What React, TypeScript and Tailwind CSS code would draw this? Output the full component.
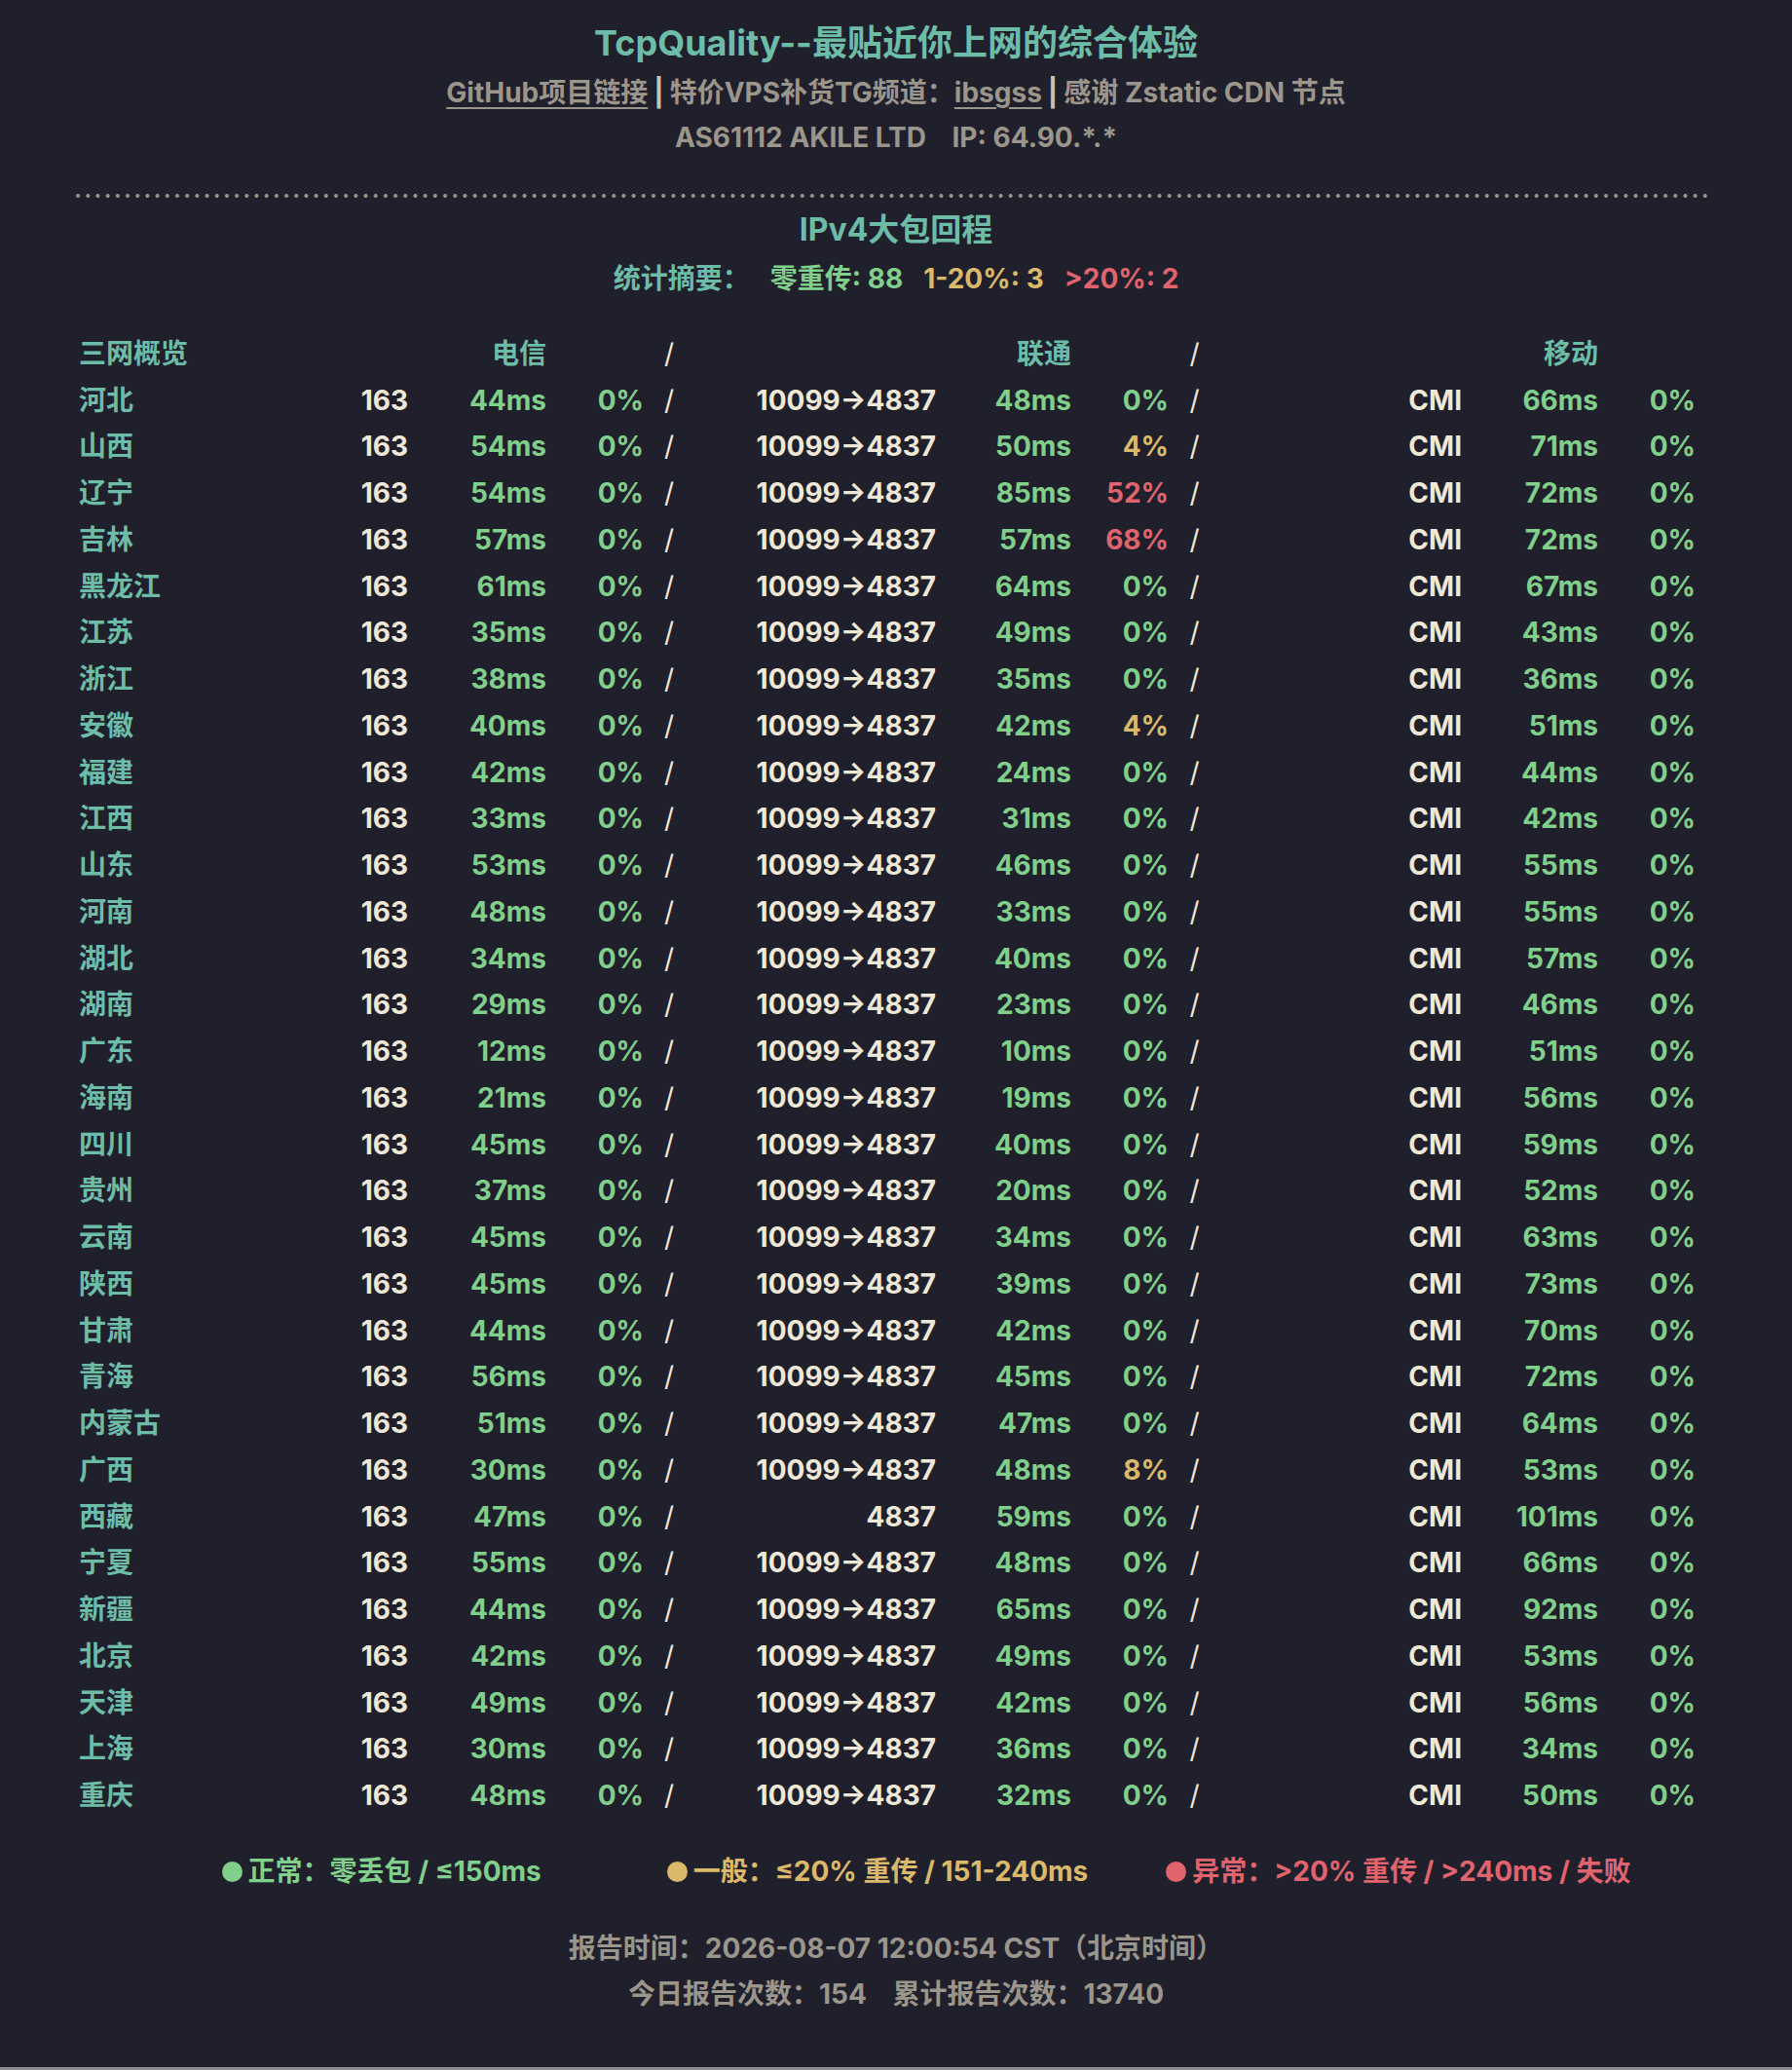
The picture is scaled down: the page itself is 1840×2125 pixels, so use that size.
import React from "react";

type Row = [string, string, string, string, string, string, string, string, string];
// name, isp1, ms1, loss1, isp2, ms2, loss2, ms3, loss3
const rows: Row[] = [
  ["河北", "163", "44ms", "0%", "10099→4837", "48ms", "0%", "66ms", "0%"],
  ["山西", "163", "54ms", "0%", "10099→4837", "50ms", "4%", "71ms", "0%"],
  ["辽宁", "163", "54ms", "0%", "10099→4837", "85ms", "52%", "72ms", "0%"],
  ["吉林", "163", "57ms", "0%", "10099→4837", "57ms", "68%", "72ms", "0%"],
  ["黑龙江", "163", "61ms", "0%", "10099→4837", "64ms", "0%", "67ms", "0%"],
  ["江苏", "163", "35ms", "0%", "10099→4837", "49ms", "0%", "43ms", "0%"],
  ["浙江", "163", "38ms", "0%", "10099→4837", "35ms", "0%", "36ms", "0%"],
  ["安徽", "163", "40ms", "0%", "10099→4837", "42ms", "4%", "51ms", "0%"],
  ["福建", "163", "42ms", "0%", "10099→4837", "24ms", "0%", "44ms", "0%"],
  ["江西", "163", "33ms", "0%", "10099→4837", "31ms", "0%", "42ms", "0%"],
  ["山东", "163", "53ms", "0%", "10099→4837", "46ms", "0%", "55ms", "0%"],
  ["河南", "163", "48ms", "0%", "10099→4837", "33ms", "0%", "55ms", "0%"],
  ["湖北", "163", "34ms", "0%", "10099→4837", "40ms", "0%", "57ms", "0%"],
  ["湖南", "163", "29ms", "0%", "10099→4837", "23ms", "0%", "46ms", "0%"],
  ["广东", "163", "12ms", "0%", "10099→4837", "10ms", "0%", "51ms", "0%"],
  ["海南", "163", "21ms", "0%", "10099→4837", "19ms", "0%", "56ms", "0%"],
  ["四川", "163", "45ms", "0%", "10099→4837", "40ms", "0%", "59ms", "0%"],
  ["贵州", "163", "37ms", "0%", "10099→4837", "20ms", "0%", "52ms", "0%"],
  ["云南", "163", "45ms", "0%", "10099→4837", "34ms", "0%", "63ms", "0%"],
  ["陕西", "163", "45ms", "0%", "10099→4837", "39ms", "0%", "73ms", "0%"],
  ["甘肃", "163", "44ms", "0%", "10099→4837", "42ms", "0%", "70ms", "0%"],
  ["青海", "163", "56ms", "0%", "10099→4837", "45ms", "0%", "72ms", "0%"],
  ["内蒙古", "163", "51ms", "0%", "10099→4837", "47ms", "0%", "64ms", "0%"],
  ["广西", "163", "30ms", "0%", "10099→4837", "48ms", "8%", "53ms", "0%"],
  ["西藏", "163", "47ms", "0%", "4837", "59ms", "0%", "101ms", "0%"],
  ["宁夏", "163", "55ms", "0%", "10099→4837", "48ms", "0%", "66ms", "0%"],
  ["新疆", "163", "44ms", "0%", "10099→4837", "65ms", "0%", "92ms", "0%"],
  ["北京", "163", "42ms", "0%", "10099→4837", "49ms", "0%", "53ms", "0%"],
  ["天津", "163", "49ms", "0%", "10099→4837", "42ms", "0%", "56ms", "0%"],
  ["上海", "163", "30ms", "0%", "10099→4837", "36ms", "0%", "34ms", "0%"],
  ["重庆", "163", "48ms", "0%", "10099→4837", "32ms", "0%", "50ms", "0%"],
];

function lossClass(v: string) {
  const n = parseInt(v, 10);
  if (n > 20) return "text-[#e0646e]";
  if (n > 0) return "text-[#dbb96b]";
  return "text-[#80cf8b]";
}

const gridCols =
  "grid grid-cols-[240px_98px_142px_100px_52px_248px_139px_100px_53px_248px_140px_100px] h-[47.75px] items-center leading-none";

export default function App() {
  return (
    <div
      className="w-[1840px] bg-[#201f2c] text-[#9b968b] font-bold"
      style={{ fontFamily: '"Inter", "Noto Sans CJK SC", sans-serif' }}
    >
      <div className="h-[2122px] pt-[20px] flex flex-col">
        <div className="text-center text-[36px] leading-[48px] text-[#6dbca7]">
          TcpQuality--最贴近你上网的综合体验
        </div>
        <div className="mt-[7px] text-center text-[28px] leading-[40px] text-[#9b968b]">
          <span className="underline underline-offset-[5px] decoration-[2px]">GitHub项目链接</span>
          <span className="mx-[6px] text-[#c9c3b5]">|</span>
          <span>特价VPS补货TG频道：</span>
          <span className="underline underline-offset-[5px] decoration-[2px]">ibsgss</span>
          <span className="mx-[6px] text-[#c9c3b5]">|</span>
          <span>感谢 Zstatic CDN 节点</span>
        </div>
        <div className="mt-[6px] text-center text-[28px] leading-[40px] text-[#9b968b] whitespace-pre">
          {"AS61112 AKILE LTD    IP: 64.90.*.*"}
        </div>
        <div className="mt-[38px] ml-[75px] w-[1683px] h-[4px] bg-[radial-gradient(circle,#9b968b_1.7px,transparent_2.2px)] bg-size-[10.2px_4px]" />
        <div className="mt-[11px] text-center text-[32px] leading-[44px] text-[#6dbca7]">
          IPv4大包回程
        </div>
        <div className="mt-[8px] flex justify-center gap-[21px] text-[28px] leading-[40px]">
          <span className="text-[#6dbca7]">统计摘要：</span>
          <span className="text-[#80cf8b]">零重传: 88</span>
          <span className="text-[#dbb96b]">1-20%: 3</span>
          <span className="text-[#e0646e]">&gt;20%: 2</span>
        </div>

        <div className="mt-[33px] pl-[81px] text-[28px]">
          <div className={gridCols}>
            <span className="text-[#6dbca7]">三网概览</span>
            <span />
            <span className="text-right text-[#6dbca7]">电信</span>
            <span />
            <span className="text-center text-[#efe8d6] font-normal">/</span>
            <span />
            <span className="text-right text-[#6dbca7]">联通</span>
            <span />
            <span className="text-center text-[#efe8d6] font-normal">/</span>
            <span />
            <span className="text-right text-[#6dbca7]">移动</span>
            <span />
          </div>
          {rows.map((r) => (
            <div key={r[0]} className={gridCols}>
              <span className="text-[#6dbca7]">{r[0]}</span>
              <span className="text-right text-[#efe8d6]">{r[1]}</span>
              <span className="text-right text-[#80cf8b]">{r[2]}</span>
              <span className={"text-right " + lossClass(r[3])}>{r[3]}</span>
              <span className="text-center text-[#efe8d6] font-normal">/</span>
              <span className="text-right text-[#efe8d6]">{r[4]}</span>
              <span className="text-right text-[#80cf8b]">{r[5]}</span>
              <span className={"text-right " + lossClass(r[6])}>{r[6]}</span>
              <span className="text-center text-[#efe8d6] font-normal">/</span>
              <span className="text-right text-[#efe8d6]">CMI</span>
              <span className="text-right text-[#80cf8b]">{r[7]}</span>
              <span className={"text-right " + lossClass(r[8])}>{r[8]}</span>
            </div>
          ))}
        </div>

        <div className="mt-[34px] pl-[62px] flex justify-center items-center text-[28px] leading-[40px]">
          <span className="flex items-center text-[#80cf8b]">
            <span className="w-[21px] h-[21px] rounded-full bg-[#80cf8b] mr-[6px]" />
            正常：零丢包 / ≤150ms
          </span>
          <span className="ml-[129px] flex items-center text-[#dbb96b]">
            <span className="w-[21px] h-[21px] rounded-full bg-[#dbb96b] mr-[6px]" />
            一般：≤20% 重传 / 151-240ms
          </span>
          <span className="ml-[80px] flex items-center text-[#e0646e]">
            <span className="w-[21px] h-[21px] rounded-full bg-[#e0646e] mr-[6px]" />
            异常：&gt;20% 重传 / &gt;240ms / 失败
          </span>
        </div>

        <div className="mt-[39px] text-center text-[28px] leading-[40px] text-[#9b968b]">
          报告时间：2026-08-07 12:00:54 CST（北京时间）
        </div>
        <div className="mt-[7px] text-center text-[28px] leading-[40px] text-[#9b968b] whitespace-pre">
          {"今日报告次数：154    累计报告次数：13740"}
        </div>
      </div>
      <div className="h-[3px] bg-[#8e8e8e]" />
    </div>
  );
}
